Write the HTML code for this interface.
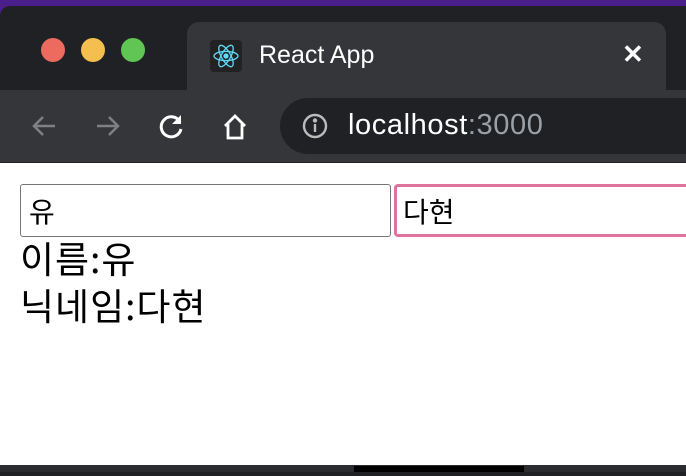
<!DOCTYPE html>
<html><head><meta charset="utf-8"><style>
*{margin:0;padding:0;box-sizing:border-box}
body{width:686px;height:472px;overflow:hidden;background:#4a1f8c;font-family:"Liberation Sans","Noto Sans CJK KR",sans-serif;position:relative}
.win{position:absolute;left:0;top:6px;width:700px;height:470px;background:#202124;border-radius:10px 0 0 0;overflow:hidden}
.dot{position:absolute;top:32px;width:24px;height:24px;border-radius:50%}
.tab{position:absolute;left:187px;top:16px;width:479px;height:70px;background:#35363a;border-radius:12px 12px 0 0}
.tool{position:absolute;left:0;top:84px;width:700px;height:72px;background:#35363a}
.omni{position:absolute;left:280px;top:8px;width:440px;height:56px;background:#202124;border-radius:28px}
.content{position:absolute;left:0;top:157px;width:700px;height:302px;background:#fff}
.bot{position:absolute;left:0;top:465px;width:686px;height:7px;background:#2b2c30}
input{position:absolute;height:53px;font-size:28px;font-family:"Liberation Sans","Noto Sans CJK KR",sans-serif;padding-left:8px;color:#000;background:#fff;outline:none}
.lbl{position:absolute;left:20px;font-size:37px;color:#000;font-family:"Noto Sans CJK KR",sans-serif;line-height:1;letter-spacing:1px}
</style></head><body>
<div class="win">
<div class="dot" style="left:41px;background:#ed6a5e"></div>
<div class="dot" style="left:81px;background:#f5bf4f"></div>
<div class="dot" style="left:121px;background:#61c554"></div>
<div class="tab">
<div style="position:absolute;left:23px;top:18px;width:32px;height:32px;background:#222;border-radius:4px">
<svg width="32" height="32" viewBox="-16 -16 32 32" fill="none" stroke="#61dafb" stroke-width="1.3"><ellipse rx="12" ry="4.6"/><ellipse rx="12" ry="4.6" transform="rotate(60)"/><ellipse rx="12" ry="4.6" transform="rotate(120)"/><circle r="2" fill="#61dafb"/></svg></div>
<div style="position:absolute;left:72px;top:19px;color:#fff;font-size:25px">React App</div>
<div style="position:absolute;left:435px;top:17px;color:#fff;font-size:26px;font-weight:bold">✕</div>
</div>
<div class="tool">
<svg style="position:absolute;left:30px;top:22px" width="28" height="28" viewBox="0 0 28 28" fill="none" stroke="#808080" stroke-width="2.5"><path d="M25 14H4M13 5L4 14l9 9"/></svg>
<svg style="position:absolute;left:94px;top:22px" width="28" height="28" viewBox="0 0 28 28" fill="none" stroke="#808080" stroke-width="2.5"><path d="M3 14h21M15 5l9 9-9 9"/></svg>
<svg style="position:absolute;left:158px;top:22px" width="28" height="28" viewBox="0 0 28 28" fill="none" stroke="#fff" stroke-width="3"><path d="M22 10A10 10 0 1 0 23 17"/><path d="M23 3v9h-9" fill="#fff" stroke="none"/></svg>
<svg style="position:absolute;left:221px;top:22px" width="28" height="30" viewBox="0 0 28 30" fill="none" stroke="#fff" stroke-width="2.8"><path d="M4 14L14 4l10 10M7 12v14h14V12"/></svg>
<div class="omni">
<svg style="position:absolute;left:22px;top:15px" width="26" height="26" viewBox="0 0 26 26" fill="none" stroke="#bbb" stroke-width="2.4"><circle cx="13" cy="13" r="11"/><path d="M13 11v8"/><circle cx="13" cy="7.5" r="1" fill="#bbb"/></svg>
<div style="position:absolute;left:68px;top:11px;font-size:29px;letter-spacing:0.6px;color:#fff">localhost<span style="color:#9aa0a6">:3000</span></div>
</div>
</div>
<div class="content">
<input style="left:20px;top:21px;width:371px;border:1px solid #767676;border-radius:3px" value="유">
<input style="left:394px;top:21px;width:320px;border:3px solid #e0739e;border-radius:4px;padding-left:6px" value="다현">
<div class="lbl" style="top:76px">이름:유</div>
<div class="lbl" style="top:123px">닉네임:다현</div>
</div>
</div>
<div class="bot"><div style="position:absolute;left:354px;top:1px;width:170px;height:6px;background:#000"></div></div>
</body></html>
